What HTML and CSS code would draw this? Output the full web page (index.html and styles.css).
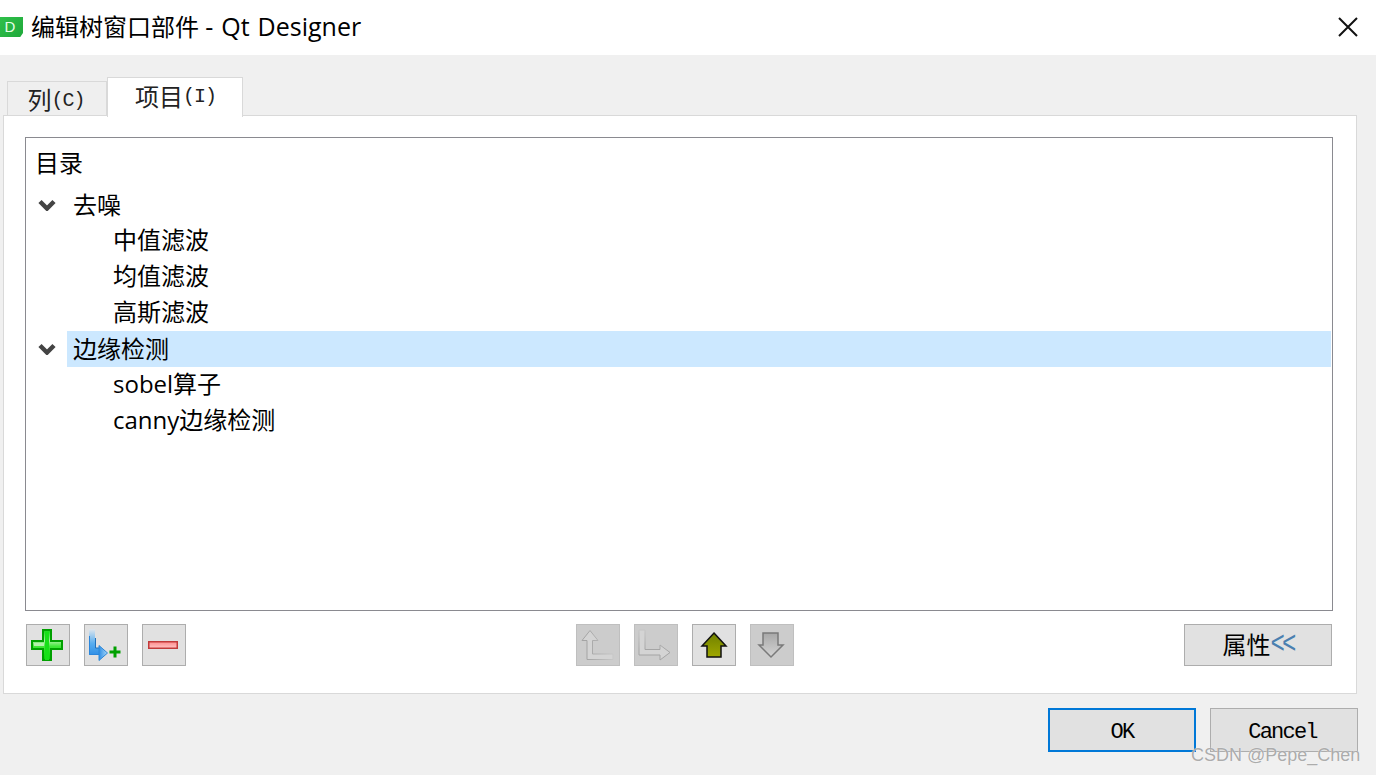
FILE: index.html

```html
<!DOCTYPE html>
<html lang="zh-CN">
<head>
    <meta charset="UTF-8">
    <title>编辑树窗口部件 - Qt Designer</title>
    <link rel="stylesheet" href="styles.css">
</head>
<body>
    <svg class="defs" width="0" height="0">
        <defs>
            <linearGradient id="greenFill" x1="0" y1="0" x2="0" y2="1">
                <stop offset="0" stop-color="#0cd80c"/>
                <stop offset="0.36" stop-color="#a8f0a0"/>
                <stop offset="0.55" stop-color="#40e838"/>
                <stop offset="1" stop-color="#00d400"/>
            </linearGradient>
            <linearGradient id="redFill" x1="0" y1="0" x2="0" y2="1">
                <stop offset="0" stop-color="#ff8c8c"/>
                <stop offset="1" stop-color="#ffc4c4"/>
            </linearGradient>
            <linearGradient id="blueFade" x1="0" y1="0" x2="0" y2="1">
                <stop offset="0" stop-color="#e0e6ec"/>
                <stop offset="0.55" stop-color="#58aef0"/>
                <stop offset="1" stop-color="#2f8fe6"/>
            </linearGradient>
            <linearGradient id="blueHead" x1="0" y1="0" x2="1" y2="0">
                <stop offset="0" stop-color="#2f8fe6"/>
                <stop offset="1" stop-color="#a8d8f8"/>
            </linearGradient>
            <linearGradient id="oliveFill" x1="0" y1="0" x2="0" y2="1">
                <stop offset="0" stop-color="#6f8000"/>
                <stop offset="1" stop-color="#a0a800"/>
            </linearGradient>
            <linearGradient id="greyFill" x1="0" y1="0" x2="0" y2="1">
                <stop offset="0" stop-color="#a8a8a8"/>
                <stop offset="1" stop-color="#d4d4d4"/>
            </linearGradient>
            <linearGradient id="fadeRight" gradientUnits="userSpaceOnUse" x1="11" y1="0" x2="38" y2="0">
                <stop offset="0" stop-color="#a4a4a4"/>
                <stop offset="1" stop-color="#c8c8c8"/>
            </linearGradient>
            <linearGradient id="fadeDown" gradientUnits="userSpaceOnUse" x1="0" y1="5" x2="0" y2="26">
                <stop offset="0" stop-color="#c6c6c6"/>
                <stop offset="1" stop-color="#a4a4a4"/>
            </linearGradient>
        </defs>
    </svg>

    <header class="titlebar">
        <div class="app-icon">D</div>
        <div class="window-title">编辑树窗口部件 <span class="title-en">- Qt Designer</span></div>
        <svg class="close-icon" width="20" height="20" viewBox="0 0 20 20">
            <path d="M1 1L19 19M19 1L1 19" stroke="#111" stroke-width="2" fill="none"/>
        </svg>
    </header>

    <main class="dialog">
        <div class="tabs">
            <div class="tab"><span class="cjk">列</span><span class="tab-en">(C)</span></div>
            <div class="tab active"><span class="cjk">项目</span><span class="tab-en">(I)</span></div>
        </div>

        <section class="pane">
            <div class="tree">
                <div class="tree-header">目录</div>

                <div class="row">
                    <svg class="chevron" width="18" height="12" viewBox="0 0 18 12">
                        <path d="M2 2.500L9 9.500L16 2.500" stroke="#444" stroke-width="4.500" fill="none"/>
                    </svg>
                    <span class="label">去噪</span>
                </div>
                <div class="row child"><span class="label">中值滤波</span></div>
                <div class="row child"><span class="label">均值滤波</span></div>
                <div class="row child"><span class="label">高斯滤波</span></div>

                <div class="row">
                    <svg class="chevron" width="18" height="12" viewBox="0 0 18 12">
                        <path d="M2 2.500L9 9.500L16 2.500" stroke="#444" stroke-width="4.500" fill="none"/>
                    </svg>
                    <span class="label selected">边缘检测</span>
                </div>
                <div class="row child"><span class="label">sobel算子</span></div>
                <div class="row child"><span class="label">canny边缘检测</span></div>
            </div>

            <div class="toolbar">
                <div class="tool-group">
                    <button class="tool">
                        <svg width="42" height="40" viewBox="1 1 42 40">
                            <path d="M17 6h8v11h11v8H25v11h-8V25H6v-8h11z" fill="url(#greenFill)" stroke="#00a000" stroke-width="2"/>
                            <path d="M19 8h4v28h-4z" fill="#18e018"/>
                            <path d="M8 19h10v3H8z" fill="#b4f2ac"/>
                        </svg>
                    </button>
                    <button class="tool">
                        <svg width="42" height="40" viewBox="1 1 42 40">
                            <path d="M5 5h6v19h4v7H5z" fill="url(#blueFade)"/>
                            <path d="M5.500 12V30.500H15" stroke="#2a86dc" fill="none"/>
                            <path d="M11.500 14V24H15" stroke="#1f70bc" fill="none"/>
                            <path d="M15 21.500L23.500 29L15 36.500z" fill="url(#blueHead)" stroke="#2c88d8"/>
                            <path d="M25.500 28h11M31 22.500v11" stroke="#00a000" stroke-width="3" fill="none"/>
                        </svg>
                    </button>
                    <button class="tool">
                        <svg width="42" height="40" viewBox="1 1 42 40">
                            <rect x="6.750" y="17.750" width="28.500" height="6.500" fill="url(#redFill)" stroke="#c23a3a" stroke-width="1.500"/>
                        </svg>
                    </button>
                </div>

                <div class="tool-group">
                    <button class="tool disabled">
                        <svg width="42" height="40" viewBox="1 1 42 40">
                            <path d="M14 6.500L22 16.500H16.500V30H37V35.500H11V16.500H6z" fill="#d4d4d4" stroke="url(#fadeRight)"/>
                        </svg>
                    </button>
                    <button class="tool disabled">
                        <svg width="42" height="40" viewBox="1 1 42 40">
                            <path d="M5 6V31H26V36L36 28.500L26 21V25.500H11V6z" fill="#d4d4d4" stroke="url(#fadeDown)"/>
                        </svg>
                    </button>
                    <button class="tool">
                        <svg width="42" height="40" viewBox="1 1 42 40">
                            <path d="M22 9L34 22H29V33H15V22H10z" fill="url(#oliveFill)" stroke="#111" stroke-width="1.500"/>
                        </svg>
                    </button>
                    <button class="tool disabled">
                        <svg width="42" height="40" viewBox="1 1 42 40">
                            <path d="M13 9H28V21H33L21 33L9 21H13z" fill="url(#greyFill)" stroke="#7a7a7a" stroke-width="1.500"/>
                        </svg>
                    </button>
                </div>

                <button class="text-btn props"><span class="cjk">属性</span><span class="chev">&lt;&lt;</span></button>
            </div>
        </section>

        <footer class="actions">
            <button class="text-btn default">OK</button>
            <button class="text-btn cancel">Cancel</button>
        </footer>
    </main>

    <div class="watermark">CSDN @Pepe_Chen</div>
</body>
</html>
```

FILE: styles.css

```css
* {
    box-sizing: border-box;
}

body {
    margin: 0;
    width: 1376px;
    height: 775px;
    overflow: hidden;
    background-color: #f0f0f0;
    color: #000;
    font-family: "Open Sans", "Noto Sans CJK SC", sans-serif;
    position: relative;
}

.defs {
    display: block;
    height: 0;
}

.cjk {
    font-family: "Noto Sans CJK SC", sans-serif;
    font-size: 24px;
}

/* title bar */
.titlebar {
    height: 55px;
    background-color: #fff;
    display: flex;
    align-items: center;
    padding: 0 18px 0 0;
}

.app-icon {
    width: 23px;
    height: 20px;
    margin-top: -1px;
    padding-right: 3px;
    background: linear-gradient(135deg, #2fc04a, #1fa83a);
    clip-path: polygon(0 0, 100% 0, 100% 80%, 88% 100%, 0 100%);
    color: #e8ffe8;
    font: 15px/20px "Liberation Sans", sans-serif;
    text-align: center;
}

.window-title {
    flex: 1;
    margin-left: 8px;
    font-size: 24px;
    line-height: 32px;
    margin-top: -3px;
}

.title-en {
    font-size: 25px;
    word-spacing: 1.5px;
}

.close-icon {
    display: block;
    margin-top: -1px;
}

/* tabs */
.dialog {
    padding: 22px 19px 0 3px;
}

.tabs {
    display: flex;
    align-items: flex-end;
    height: 38px;
    padding-left: 4px;
    font-family: "Liberation Mono", "Noto Sans CJK SC", monospace;
    font-size: 20px;
}

.tab {
    width: 100px;
    height: 34px;
    padding-right: 2px;
    background-color: #efefef;
    border: 1px solid #d9d9d9;
    border-bottom: none;
    display: flex;
    align-items: center;
    justify-content: center;
    color: #222;
}

.tab-en {
    letter-spacing: -1px;
    padding-top: 3px;
}

.tab.active {
    width: 136px;
    height: 40px;
    margin-bottom: -2px;
    background-color: #fff;
    position: relative;
    z-index: 1;
    padding: 0 0 5px 1px;
}

/* main pane */
.pane {
    height: 579px;
    background-color: #fff;
    border: 1px solid #d9d9d9;
    padding: 21px 23px 0 21px;
}

.tree {
    height: 474px;
    border: 1px solid #8a8a90;
    font-size: 24px;
}

.tree-header {
    height: 49px;
    padding: 6px 0 0 9px;
    line-height: 38px;
}

.row {
    height: 36px;
    display: flex;
    align-items: center;
    position: relative;
    padding-left: 41px;
}

.row.child {
    padding-left: 87px;
}

.chevron {
    position: absolute;
    left: 12px;
    top: 12px;
}

.label {
    line-height: 36px;
    padding-left: 6px;
    white-space: nowrap;
}

.row.child .label {
    padding: 0 0 2px;
    line-height: 34px;
}

.label.selected {
    flex: 1;
    margin-right: 1px;
    background-color: #cce8ff;
}

/* buttons under the tree */
.toolbar {
    display: flex;
    justify-content: space-between;
    margin-top: 13px;
    padding: 0 0 0 1px;
}

.tool-group {
    display: flex;
    gap: 14px;
}

.tool {
    width: 44px;
    height: 42px;
    padding: 0;
    background-color: #e1e1e1;
    border: 1px solid #adadad;
    display: block;
}

.tool svg {
    display: block;
}

.tool.disabled {
    background-color: #cccccc;
    border-color: #bfbfbf;
}

.text-btn {
    width: 148px;
    height: 42px;
    padding: 4px 0 0;
    background-color: #e1e1e1;
    border: 1px solid #adadad;
    font-family: "Liberation Mono", "Noto Sans CJK SC", monospace;
    font-size: 22px;
    letter-spacing: -1.8px;
    color: #000;
}

.cancel {
    padding-right: 3px;
}

.props {
    margin-right: 1px;
    padding: 0 0 3px 4px;
    letter-spacing: 0;
    display: flex;
    align-items: center;
    justify-content: center;
}

.chev {
    display: inline-block;
    font-size: 24px;
    line-height: 30px;
    letter-spacing: -3px;
    color: #4a7fb0;
    padding: 3px 4px 0 0;
    transform: scaleY(1.3);
}

/* OK / Cancel */
.actions {
    display: flex;
    justify-content: flex-end;
    gap: 14px;
    margin: 14px -1px 0 0;
}

.actions .text-btn {
    height: 44px;
}

.text-btn.default {
    border: 2px solid #0078d7;
}

.watermark {
    position: absolute;
    left: 1191px;
    top: 743px;
    font: 18px/24px "Liberation Sans", sans-serif;
    color: rgba(150, 150, 150, 0.8);
    text-shadow: 0 0 1px #fff;
    white-space: nowrap;
}
```
